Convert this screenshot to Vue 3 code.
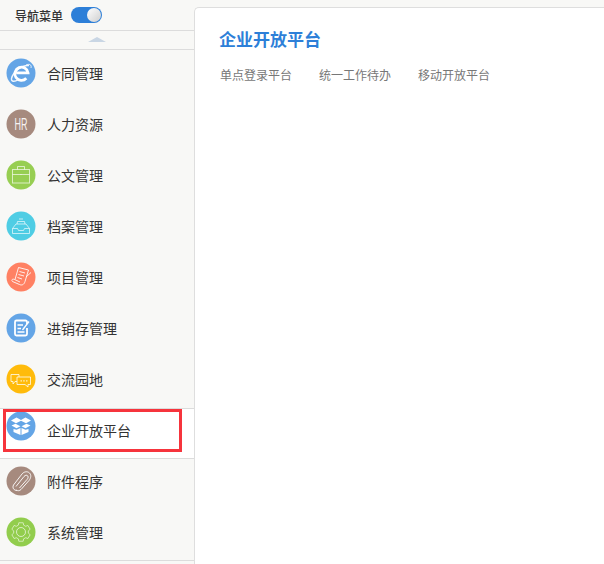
<script setup>
const topItems = [
  { key: 'ie', label: '合同管理', color: '#64a5e6' },
  { key: 'hr', label: '人力资源', color: '#a68a7e' },
  { key: 'case', label: '公文管理', color: '#97ce52' },
  { key: 'tray', label: '档案管理', color: '#4fcde4' },
  { key: 'scroll', label: '项目管理', color: '#ff8163' },
  { key: 'note', label: '进销存管理', color: '#64a5e6' },
  { key: 'chat', label: '交流园地', color: '#ffbb0b' }
]
const activeItem = { key: 'box', label: '企业开放平台', color: '#64a5e6' }
const bottomItems = [
  { key: 'clip', label: '附件程序', color: '#a68a7e' },
  { key: 'gear', label: '系统管理', color: '#92cd4d' }
]
const links = ['单点登录平台', '统一工作待办', '移动开放平台']
const groups = [
  { name: 'upper', items: topItems },
  { name: 'active', items: [activeItem] },
  { name: 'lower', items: bottomItems }
]
</script>

<template>
  <div class="page">
    <aside class="sidebar">
      <header class="side-head">
        <span class="side-title">导航菜单</span>
        <span class="toggle"><span class="knob"></span></span>
      </header>
      <div class="collapse"><span class="arrow"></span></div>
      <ul v-for="g in groups" :key="g.name" class="group" :class="g.name">
        <li v-for="item in g.items" :key="item.key" class="item">
          <svg class="icon" viewBox="0 0 30 30" width="30" height="30">
            <circle cx="15" cy="15" r="14.5" :fill="item.color" />
            <g v-if="item.key === 'ie'" fill="none" stroke="#fff">
              <path d="M10.500 14.800H22A6.600 6.600 0 1 0 20.300 20.300" stroke-width="2.800" />
              <path d="M23 7.500C15 7 7 14 5.500 20.500C5 24 9 24 12 21.500" stroke-width="1.400" opacity=".9" />
              <path d="M20 7C23 5.500 26 6.500 25 10" stroke-width="1" opacity=".8" />
            </g>
            <text v-else-if="item.key === 'hr'" class="hr" transform="translate(15 21) scale(.53 1)" text-anchor="middle">HR</text>
            <g v-else-if="item.key === 'case'" fill="none" stroke="#fff" stroke-opacity=".65">
              <rect x="6.500" y="9.500" width="17" height="13.500" />
              <path d="M6.500 14.500H23.500M11.500 9.500V6.500H18.500V9.500M15 14V15" />
            </g>
            <g v-else-if="item.key === 'tray'" fill="none" stroke="#fff" stroke-opacity=".65">
              <path d="M6.500 17.500L10 13H20L23.500 17.500V22.500H6.500ZM6.500 17.500H11.500L12.500 19.500H17.500L18.500 17.500H23.500" />
              <path d="M11.500 10.500H18.500M11 13L11.500 10.500M19 13L18.500 10.500M13 8H17" />
            </g>
            <g v-else-if="item.key === 'scroll'" fill="none" stroke="#fff" stroke-opacity=".85">
              <path d="M12.500 5.500L22.500 8L19 19.500C18 23 15.500 23.500 13.500 22.500L6.500 19.500C5 18 6.500 16.500 8.500 17.500L14 20" />
              <path d="M12.500 5.500L9 17.500M13.500 9.500L19 11M12.500 12.500L18 14M11.500 15.500L16 17M20 15L25 10.500" />
            </g>
            <g v-else-if="item.key === 'note'" fill="none" stroke="#fff">
              <path d="M21 11V9A1.500 1.500 0 0 0 19.500 7.500H10.500A1.500 1.500 0 0 0 9 9V21A1.500 1.500 0 0 0 10.500 22.500H19.500A1.500 1.500 0 0 0 21 21V15" stroke-width="1.800" />
              <path d="M11.500 12H17M11.500 15.500H15M11.500 19H18.500" stroke-width="1.500" />
              <path d="M16.500 17L23 8.500" stroke-width="1.300" />
            </g>
            <g v-else-if="item.key === 'chat'" fill="none" stroke="#fff" stroke-opacity=".75">
              <path d="M11 17.500H9L7 20V17.500H5V10.500H13V13" />
              <path d="M11 13H24.500V20.500H22V23L19 20.500H11Z" />
              <path d="M14.500 16.800H16M17.200 16.800H18.700M20 16.800H21.500" stroke-width="1.300" />
            </g>
            <g v-else-if="item.key === 'box'" fill="#fff">
              <path d="M5 9.500L10.500 6.500L15 9L19.500 6.500L25 9.500L20 12.200L15 9.800L10 12.200Z" />
              <path d="M5.500 14.500L9.500 12.800L14.500 15.300L10.500 17.300ZM24.500 14.500L20.500 12.800L15.500 15.300L19.500 17.300Z" />
              <path d="M7.500 18L10.500 18.800L14.500 17V24L7.500 21ZM22.500 18L19.500 18.800L15.500 17V24L22.500 21Z" />
            </g>
            <g v-else-if="item.key === 'clip'" fill="none" stroke="#fff" stroke-opacity=".9">
              <path d="M11 24.500C8 24.500 6 22 7.500 19L16 8C18 5.500 21.500 5 23.500 7C25.500 9 25 12 23 14.500L15 23.500C13.500 25 11.500 25 10.500 24" />
              <path d="M10 20.500L18 10.500C19.500 8.800 21 9 21.800 10C22.500 11 22 12.500 21 13.500L13.500 22" />
            </g>
            <g v-else-if="item.key === 'gear'" fill="none" stroke="#fff" stroke-opacity=".65">
              <circle cx="15" cy="15" r="4.500" />
              <path transform="translate(15 15) scale(.88) translate(-15 -16)" d="M12.500 5.500H17.500L18 8.200L20.300 9.500L22.900 8.600L25.400 12.900L23.300 14.700V17.300L25.400 19.100L22.900 23.400L20.300 22.500L18 23.800L17.500 26.500H12.500L12 23.800L9.700 22.500L7.100 23.400L4.600 19.100L6.700 17.300V14.700L4.600 12.900L7.100 8.600L9.700 9.500L12 8.200Z" />
            </g>
          </svg>
          <span class="label">{{ item.label }}</span>
        </li>
      </ul>
    </aside>
    <main class="card">
      <h1 class="title">企业开放平台</h1>
      <nav class="links">
        <a v-for="link in links" :key="link" class="link">{{ link }}</a>
      </nav>
    </main>
    <div class="annotation"></div>
  </div>
</template>

<style>
html, body { margin: 0; padding: 0; background: #f8f8f6; }
</style>

<style scoped>
.page {
  position: relative;
  display: flex;
  width: 604px;
  height: 564px;
  overflow: hidden;
  background: #f8f8f6;
  font-family: "Noto Sans CJK SC", "Noto Sans", sans-serif;
}
.sidebar {
  flex: 0 0 195px;
  width: 195px;
}
.side-head {
  display: flex;
  align-items: center;
  gap: 9px;
  height: 30px;
  padding-left: 15px;
  border-bottom: 1px solid #dcdcdc;
}
.side-title {
  width: 47px;
  font-size: 12px;
  font-weight: 500;
  color: #333;
  white-space: nowrap;
}
.toggle {
  display: flex;
  align-items: center;
  justify-content: flex-end;
  width: 31px;
  height: 16px;
  padding: 0 1px;
  box-sizing: border-box;
  border-radius: 8px;
  background: #2d7fd8;
}
.knob {
  width: 14px;
  height: 14px;
  border-radius: 50%;
  background: linear-gradient(135deg, #fff, #cfcfcf);
}
.collapse {
  display: flex;
  justify-content: center;
  align-items: center;
  height: 18px;
  border-bottom: 1px solid #dcdcdc;
  padding-right: 2px;
}
.arrow {
  width: 0;
  height: 0;
  border-left: 9px solid transparent;
  border-right: 9px solid transparent;
  border-bottom: 5px solid #c9d6e4;
  margin-top: -1px;
}
.group {
  list-style: none;
  margin: 0;
  padding: 0;
  box-sizing: border-box;
}
.upper {
  height: 359px;
  border-right: 1px solid #dcdcdc;
  border-bottom: 1px solid #dcdcdc;
}
.lower {
  height: 103px;
  border-top: 1px solid #dcdcdc;
  border-right: 1px solid #dcdcdc;
  border-bottom: 1px solid #dcdcdc;
}
.active {
  height: 49px;
  background: #fff;
}
.item {
  display: flex;
  align-items: center;
  gap: 11px;
  height: 51px;
  padding: 0 0 5px 6px;
  box-sizing: border-box;
}
.lower .item {
  padding-bottom: 7px;
}
.active .item {
  height: 49px;
  padding-bottom: 8px;
}
.active .icon {
  margin-top: -7px;
}
.icon {
  flex: none;
  display: block;
}
.hr {
  font-family: "Liberation Sans", sans-serif;
  font-size: 17px;
  fill: #fff;
  opacity: .9;
}
.label {
  font-size: 14px;
  color: #333;
  white-space: nowrap;
}
.card {
  flex: 1;
  margin: 7px 0 0 -1px;
  box-sizing: border-box;
  padding: 20px 25px;
  background: #fff;
  border-top: 1px solid #dedede;
  border-left: 1px solid #dedede;
  border-top-left-radius: 5px;
  position: relative;
}
.title {
  margin: 0;
  font-size: 17px;
  line-height: 22px;
  font-weight: 700;
  color: #2d7fd8;
  margin-left: -1px;
}
.links {
  display: flex;
  gap: 27px;
  margin-top: 16px;
}
.link {
  font-size: 12px;
  line-height: 18px;
  color: #777;
  white-space: nowrap;
}
.annotation {
  position: absolute;
  left: 3px;
  top: 409px;
  width: 179px;
  height: 43px;
  box-sizing: border-box;
  border: 3px solid #f6343c;
}
</style>
